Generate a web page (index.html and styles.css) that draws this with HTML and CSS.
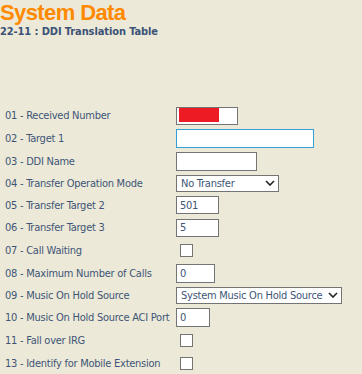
FILE: index.html
```html
<!DOCTYPE html>
<html>
<head>
    <title>System Data</title>
    <meta charset="UTF-8">
    <link rel="stylesheet" href="styles.css">
</head>
<body>
    <h1 class="page-title">System Data</h1>
    <h2 class="page-subtitle">22-11 : DDI Translation Table</h2>

    <!-- DDI translation entry -->
    <form class="data-form" id="ddiForm">
        <div class="form-row tall">
            <label for="ReceivedNumber">01 - Received Number</label>
            <span class="masked">
                <input type="text" id="ReceivedNumber" class="field w-num" value="">
                <span class="mask"></span>
            </span>
        </div>
        <div class="form-row tall">
            <label for="Target1">02 - Target 1</label>
            <input type="text" id="Target1" class="field w-target focused">
        </div>
        <div class="form-row">
            <label for="DDIName">03 - DDI Name</label>
            <input type="text" id="DDIName" class="field w-name">
        </div>
        <div class="form-row">
            <label for="TransferMode">04 - Transfer Operation Mode</label>
            <span class="select-wrap">
                <select id="TransferMode" class="select w-mode">
                    <option>No Transfer</option>
                </select>
                <svg class="chevron" width="10" height="6" viewBox="0 0 10 6"><path d="M1 1 L5 5 L9 1" fill="none" stroke="#222" stroke-width="1.6"/></svg>
            </span>
        </div>
        <div class="form-row">
            <label for="TransferTarget2">05 - Transfer Target 2</label>
            <input type="text" id="TransferTarget2" class="field w-short" value="501">
        </div>
        <div class="form-row tall">
            <label for="TransferTarget3">06 - Transfer Target 3</label>
            <input type="text" id="TransferTarget3" class="field w-short" value="5">
        </div>
        <div class="form-row tall">
            <label for="CallWaiting">07 - Call Waiting</label>
            <input type="checkbox" id="CallWaiting" class="check">
        </div>
        <div class="form-row">
            <label for="MaxCalls">08 - Maximum Number of Calls</label>
            <input type="text" id="MaxCalls" class="field w-calls" value="0">
        </div>
        <div class="form-row">
            <label for="MohSource">09 - Music On Hold Source</label>
            <span class="select-wrap">
                <select id="MohSource" class="select w-moh">
                    <option>System Music On Hold Source</option>
                </select>
                <svg class="chevron" width="10" height="6" viewBox="0 0 10 6"><path d="M1 1 L5 5 L9 1" fill="none" stroke="#222" stroke-width="1.6"/></svg>
            </span>
        </div>
        <div class="form-row tall">
            <label for="MohPort">10 - Music On Hold Source ACI Port</label>
            <input type="text" id="MohPort" class="field w-port" value="0">
        </div>
        <div class="form-row tall">
            <label for="FallOver">11 - Fall over IRG</label>
            <input type="checkbox" id="FallOver" class="check">
        </div>
        <div class="form-row tall">
            <label for="MobileExt">13 - Identify for Mobile Extension</label>
            <input type="checkbox" id="MobileExt" class="check">
        </div>
    </form>
</body>
</html>
```

FILE: styles.css
```css
body {
    margin: 0;
    background: #ece9d8;
    font-family: "DejaVu Sans Condensed", "DejaVu Sans", sans-serif;
    font-size: 11px;
    letter-spacing: -0.25px;
    color: #3e5577;
}
.page-title {
    margin: 0;
    font-family: "Liberation Sans", Arial, sans-serif;
    font-size: 22px;
    font-weight: bold;
    line-height: 26px;
    letter-spacing: -0.6px;
    color: #ff8a00;
}
.page-subtitle {
    margin: 0;
    font-size: 11px;
    font-weight: bold;
    line-height: 12px;
    letter-spacing: -0.1px;
    color: #3b5276;
}
.data-form {
    margin-top: 66px;
    padding-left: 5px;
}
.form-row {
    display: flex;
    align-items: center;
    height: 22px;
}
.form-row.tall {
    height: 23px;
}
.form-row label {
    width: 171px;
    flex: none;
    line-height: 13px;
    white-space: nowrap;
}
.field {
    box-sizing: border-box;
    height: 19px;
    margin: 0;
    padding: 0 3px;
    border: 1px solid #747474;
    background: #fff;
    font-family: inherit;
    font-size: 11px;
    letter-spacing: inherit;
    color: #3e5577;
    outline: none;
}
.field.focused {
    border-color: #34a0da;
}
.w-num { width: 62px; height: 18px; }
.w-target { width: 138px; }
.w-name { width: 81px; }
.w-short { width: 43px; height: 18px; }
.w-calls { width: 39px; }
.w-port { width: 34px; }
.masked {
    position: relative;
    display: inline-block;
    height: 18px;
}
.mask {
    position: absolute;
    left: 3px;
    top: 1px;
    width: 40px;
    height: 14px;
    background: #ed1c24;
}
.select-wrap {
    position: relative;
    display: inline-block;
    height: 17px;
}
.select {
    -webkit-appearance: none;
    appearance: none;
    box-sizing: border-box;
    height: 17px;
    margin: 0;
    padding: 0 0 0 4px;
    border: 1px solid #747474;
    border-radius: 0;
    background: #fff;
    font-family: inherit;
    font-size: 11px;
    letter-spacing: inherit;
    line-height: 15px;
    color: #3e5577;
}
.w-mode { width: 103px; }
.w-moh { width: 166px; }
.chevron {
    position: absolute;
    right: 4px;
    top: 5px;
    pointer-events: none;
}
.check {
    -webkit-appearance: none;
    appearance: none;
    box-sizing: border-box;
    width: 13px;
    height: 13px;
    margin: 0 0 0 4px;
    border: 1px solid #747474;
    background: #fff;
}
```
